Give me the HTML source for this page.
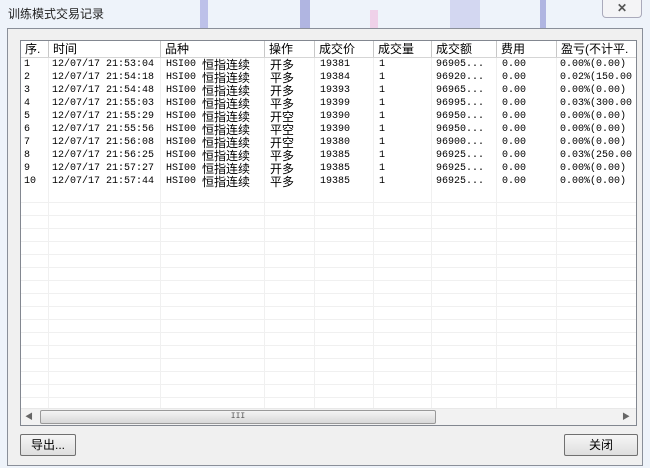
<!DOCTYPE html><html><head><meta charset="utf-8"><style>
*{margin:0;padding:0;box-sizing:border-box}
body{width:650px;height:468px;overflow:hidden;background:#eef3fa;font-family:"Liberation Mono","Noto Sans CJK SC",monospace;position:relative}
.title{position:absolute;left:8px;top:5px;font:12px "Liberation Sans","Noto Sans CJK SC",sans-serif;color:#222}
.x{position:absolute;left:602px;top:0;width:40px;height:18px;border:1px solid #aab;border-top:none;border-radius:0 0 4px 4px;background:#f4f4f6;color:#555;font:bold 12px sans-serif;text-align:center;line-height:17px}
.panel{position:absolute;left:7px;top:28px;width:636px;height:438px;background:#f0f0f0;border:1px solid #8a8f99}
.list{position:absolute;left:20px;top:40px;width:617px;height:386px;background:#fff;border:1px solid #828790;overflow:hidden}
.hd{position:absolute;left:0;top:0;height:17px;width:100%;background:#fff;border-bottom:1px solid #d5d5d5}
.h{position:absolute;top:0;height:16px;font:12px "Liberation Sans","Noto Sans CJK SC",sans-serif;line-height:16px;padding-left:4px;border-right:1px solid #c8c8c8;white-space:nowrap;overflow:hidden}
.vl{position:absolute;top:17px;bottom:17px;width:1px;background:#f0f0f0}
.hl{position:absolute;left:0;width:100%;height:1px;background:#f0f0f0}
.sb{position:absolute;left:0;bottom:0;width:100%;height:17px;background:#f2f2f2;border-top:1px solid #e8e8e8}
.thumb{position:absolute;left:19px;top:1px;width:396px;height:14px;border:1px solid #999;border-radius:2px;background:linear-gradient(#f4f4f4,#d8d8d8);text-align:center;font-size:8px;line-height:12px;color:#555}
.btn{position:absolute;height:22px;border:1px solid #707070;background:linear-gradient(#f6f6f6,#dedede);font:12px "Liberation Sans","Noto Sans CJK SC",sans-serif;line-height:20px;text-align:center;border-radius:2px}
.r{position:absolute;left:20px;width:617px;height:13px;font-size:10px;line-height:13px;white-space:nowrap}
.r span{position:absolute;top:0;height:13px;line-height:13px;overflow:hidden}
.r i{font-style:normal;font-family:"Noto Sans CJK SC",sans-serif;font-size:12px;line-height:13px;display:inline-block;height:13px;vertical-align:top}
</style></head><body>
<div style="position:absolute;left:200px;top:0;width:8px;height:28px;background:#8b8fd8;opacity:.5"></div>
<div style="position:absolute;left:300px;top:0;width:10px;height:28px;background:#7178c8;opacity:.5"></div>
<div style="position:absolute;left:370px;top:10px;width:8px;height:18px;background:#f0b0d8;opacity:.5"></div>
<div style="position:absolute;left:450px;top:0;width:30px;height:28px;background:#b7bce8;opacity:.5"></div>
<div style="position:absolute;left:540px;top:0;width:6px;height:28px;background:#7178c8;opacity:.5"></div>
<div class="title">训练模式交易记录</div>
<div class="x">✕</div>
<div class="panel"></div>
<div class="list">
<div class="hd">
<div class="h" style="left:0;width:28px">序.</div>
<div class="h" style="left:28px;width:112px">时间</div>
<div class="h" style="left:140px;width:104px">品种</div>
<div class="h" style="left:244px;width:50px">操作</div>
<div class="h" style="left:294px;width:59px">成交价</div>
<div class="h" style="left:353px;width:58px">成交量</div>
<div class="h" style="left:411px;width:65px">成交额</div>
<div class="h" style="left:476px;width:60px">费用</div>
<div class="h" style="left:536px;width:90px">盈亏(不计平.</div>
</div>
<div class="vl" style="left:27px"></div><div class="vl" style="left:139px"></div><div class="vl" style="left:243px"></div><div class="vl" style="left:293px"></div><div class="vl" style="left:352px"></div><div class="vl" style="left:410px"></div><div class="vl" style="left:475px"></div><div class="vl" style="left:535px"></div>
<div class="hl" style="top:161px"></div><div class="hl" style="top:174px"></div><div class="hl" style="top:187px"></div><div class="hl" style="top:200px"></div><div class="hl" style="top:213px"></div><div class="hl" style="top:226px"></div><div class="hl" style="top:239px"></div><div class="hl" style="top:252px"></div><div class="hl" style="top:265px"></div><div class="hl" style="top:278px"></div><div class="hl" style="top:291px"></div><div class="hl" style="top:304px"></div><div class="hl" style="top:317px"></div><div class="hl" style="top:330px"></div><div class="hl" style="top:343px"></div><div class="hl" style="top:356px"></div>
<div class="sb"><span style="position:absolute;left:4px;top:2px;font-size:8px;color:#666">◀</span><div class="thumb">III</div><span style="position:absolute;right:6px;top:2px;font-size:8px;color:#666">▶</span></div>
</div>
<div class="btn" style="left:20px;top:434px;width:56px">导出...</div>
<div class="btn" style="left:564px;top:434px;width:74px">关闭</div>

<div class="r" style="top:58px"><span style="left:4px">1</span><span style="left:32px">12/07/17 21:53:04</span><span style="left:146px">HSI00 <i>恒指连续</i></span><span style="left:250px"><i>开多</i></span><span style="left:300px">19381</span><span style="left:359px">1</span><span style="left:416px">96905...</span><span style="left:482px">0.00</span><span style="left:540px;width:76px">0.00%(0.00)</span></div>
<div class="r" style="top:71px"><span style="left:4px">2</span><span style="left:32px">12/07/17 21:54:18</span><span style="left:146px">HSI00 <i>恒指连续</i></span><span style="left:250px"><i>平多</i></span><span style="left:300px">19384</span><span style="left:359px">1</span><span style="left:416px">96920...</span><span style="left:482px">0.00</span><span style="left:540px;width:76px">0.02%(150.00</span></div>
<div class="r" style="top:84px"><span style="left:4px">3</span><span style="left:32px">12/07/17 21:54:48</span><span style="left:146px">HSI00 <i>恒指连续</i></span><span style="left:250px"><i>开多</i></span><span style="left:300px">19393</span><span style="left:359px">1</span><span style="left:416px">96965...</span><span style="left:482px">0.00</span><span style="left:540px;width:76px">0.00%(0.00)</span></div>
<div class="r" style="top:97px"><span style="left:4px">4</span><span style="left:32px">12/07/17 21:55:03</span><span style="left:146px">HSI00 <i>恒指连续</i></span><span style="left:250px"><i>平多</i></span><span style="left:300px">19399</span><span style="left:359px">1</span><span style="left:416px">96995...</span><span style="left:482px">0.00</span><span style="left:540px;width:76px">0.03%(300.00</span></div>
<div class="r" style="top:110px"><span style="left:4px">5</span><span style="left:32px">12/07/17 21:55:29</span><span style="left:146px">HSI00 <i>恒指连续</i></span><span style="left:250px"><i>开空</i></span><span style="left:300px">19390</span><span style="left:359px">1</span><span style="left:416px">96950...</span><span style="left:482px">0.00</span><span style="left:540px;width:76px">0.00%(0.00)</span></div>
<div class="r" style="top:123px"><span style="left:4px">6</span><span style="left:32px">12/07/17 21:55:56</span><span style="left:146px">HSI00 <i>恒指连续</i></span><span style="left:250px"><i>平空</i></span><span style="left:300px">19390</span><span style="left:359px">1</span><span style="left:416px">96950...</span><span style="left:482px">0.00</span><span style="left:540px;width:76px">0.00%(0.00)</span></div>
<div class="r" style="top:136px"><span style="left:4px">7</span><span style="left:32px">12/07/17 21:56:08</span><span style="left:146px">HSI00 <i>恒指连续</i></span><span style="left:250px"><i>开空</i></span><span style="left:300px">19380</span><span style="left:359px">1</span><span style="left:416px">96900...</span><span style="left:482px">0.00</span><span style="left:540px;width:76px">0.00%(0.00)</span></div>
<div class="r" style="top:149px"><span style="left:4px">8</span><span style="left:32px">12/07/17 21:56:25</span><span style="left:146px">HSI00 <i>恒指连续</i></span><span style="left:250px"><i>平多</i></span><span style="left:300px">19385</span><span style="left:359px">1</span><span style="left:416px">96925...</span><span style="left:482px">0.00</span><span style="left:540px;width:76px">0.03%(250.00</span></div>
<div class="r" style="top:162px"><span style="left:4px">9</span><span style="left:32px">12/07/17 21:57:27</span><span style="left:146px">HSI00 <i>恒指连续</i></span><span style="left:250px"><i>开多</i></span><span style="left:300px">19385</span><span style="left:359px">1</span><span style="left:416px">96925...</span><span style="left:482px">0.00</span><span style="left:540px;width:76px">0.00%(0.00)</span></div>
<div class="r" style="top:175px"><span style="left:4px">10</span><span style="left:32px">12/07/17 21:57:44</span><span style="left:146px">HSI00 <i>恒指连续</i></span><span style="left:250px"><i>平多</i></span><span style="left:300px">19385</span><span style="left:359px">1</span><span style="left:416px">96925...</span><span style="left:482px">0.00</span><span style="left:540px;width:76px">0.00%(0.00)</span></div>
</body></html>
